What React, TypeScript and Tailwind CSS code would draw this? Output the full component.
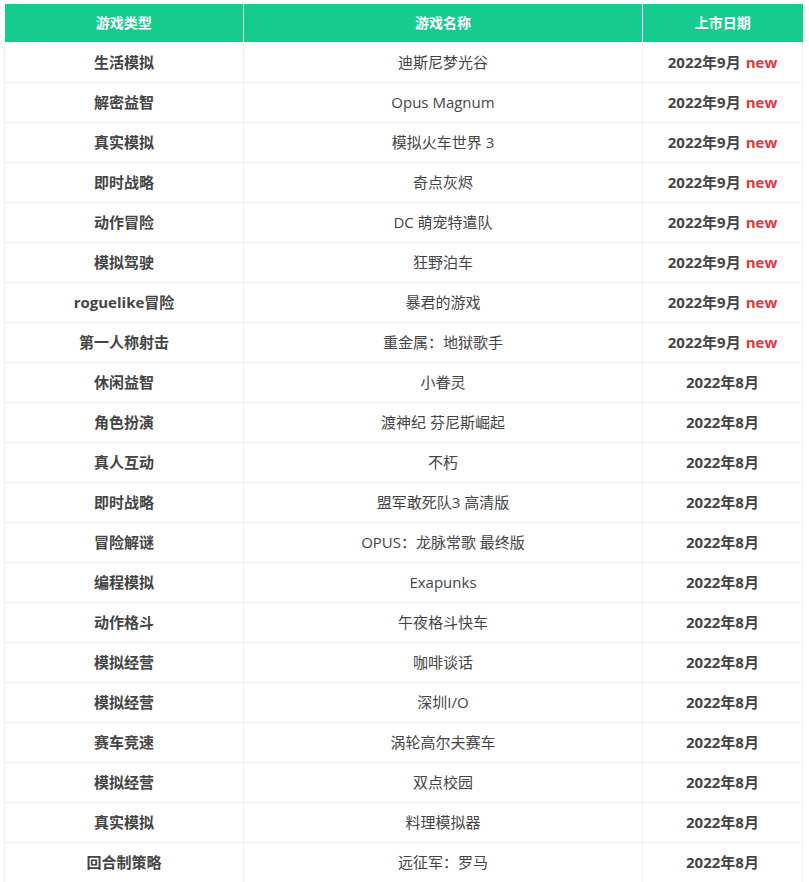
const rows: [string, string, string, boolean][] = [
  ['生活模拟', '迪斯尼梦光谷', '2022年9月', true],
  ['解密益智', 'Opus Magnum', '2022年9月', true],
  ['真实模拟', '模拟火车世界 3', '2022年9月', true],
  ['即时战略', '奇点灰烬', '2022年9月', true],
  ['动作冒险', 'DC 萌宠特遣队', '2022年9月', true],
  ['模拟驾驶', '狂野泊车', '2022年9月', true],
  ['roguelike冒险', '暴君的游戏', '2022年9月', true],
  ['第一人称射击', '重金属：地狱歌手', '2022年9月', true],
  ['休闲益智', '小眷灵', '2022年8月', false],
  ['角色扮演', '渡神纪 芬尼斯崛起', '2022年8月', false],
  ['真人互动', '不朽', '2022年8月', false],
  ['即时战略', '盟军敢死队3 高清版', '2022年8月', false],
  ['冒险解谜', 'OPUS：龙脉常歌 最终版', '2022年8月', false],
  ['编程模拟', 'Exapunks', '2022年8月', false],
  ['动作格斗', '午夜格斗快车', '2022年8月', false],
  ['模拟经营', '咖啡谈话', '2022年8月', false],
  ['模拟经营', '深圳I/O', '2022年8月', false],
  ['赛车竞速', '涡轮高尔夫赛车', '2022年8月', false],
  ['模拟经营', '双点校园', '2022年8月', false],
  ['真实模拟', '料理模拟器', '2022年8月', false],
  ['回合制策略', '远征军：罗马', '2022年8月', false],
];

export default function App() {
  return (
    <div
      className="bg-white px-[4px] pt-[4px] text-[15px] text-[#444]"
      style={{ fontFamily: '"Open Sans", "Noto Sans CJK SC", sans-serif' }}
    >
      <table className="w-[798px] table-fixed border-collapse">
        <colgroup>
          <col className="w-[239px]" />
          <col className="w-[399px]" />
          <col className="w-[160px]" />
        </colgroup>
        <thead>
          <tr className="h-[38px] bg-[#15cc8f] text-[14px] text-white">
            <th className="border-r border-white font-bold">游戏类型</th>
            <th className="border-r border-white font-bold">游戏名称</th>
            <th className="font-bold">上市日期</th>
          </tr>
        </thead>
        <tbody>
          {rows.map(([type, name, date, isNew], i) => (
            <tr key={i} className="h-[40px]">
              <td className="border border-[#f0f0f0] text-center font-bold">{type}</td>
              <td className="border border-[#f0f0f0] text-center">{name}</td>
              <td className="border border-[#f0f0f0] text-center font-bold">
                {date}
                {isNew && <span className="ml-[5px] text-[#e8343c]">new</span>}
              </td>
            </tr>
          ))}
        </tbody>
      </table>
    </div>
  );
}
